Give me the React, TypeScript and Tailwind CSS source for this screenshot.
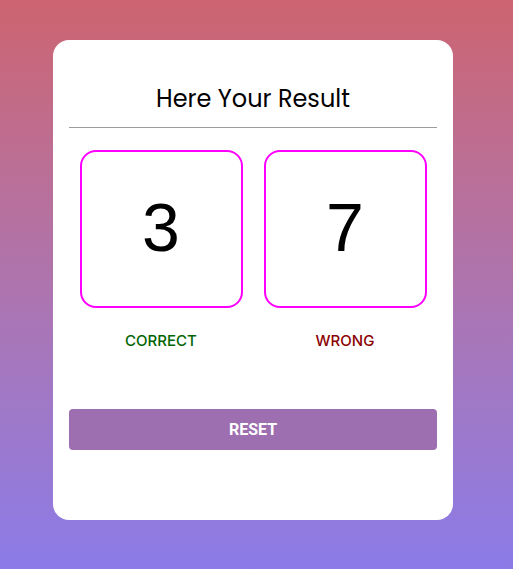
import React, { useState } from 'react';

export default function App() {
  const [correct, setCorrect] = useState(3);
  const [wrong, setWrong] = useState(7);

  const reset = () => {
    setCorrect(0);
    setWrong(0);
  };

  return (
    <div className="min-h-[569px] w-full bg-gradient-to-b from-[#cd6470] to-[#8b7be8] pt-[40px] pl-[53px] font-['Open_Sans',sans-serif]">
      <div className="w-[400px] h-[480px] rounded-2xl bg-white px-4 pt-[41px]">
        <h1 className="text-center text-[24px] leading-[36px] text-black font-['Poppins','Lato',sans-serif]">
          Here Your Result
        </h1>
        <hr className="mt-[10px] border-0 border-t border-[#9c9c9c]" />
        <div className="mt-[22px] grid grid-cols-2">
          <div className="flex flex-col items-center">
            <div className="flex h-[158px] w-[163px] items-center justify-center rounded-2xl border-2 border-[#ff00ff] pb-[4px] font-['Liberation_Sans',sans-serif] text-[68px] text-black">
              {correct}
            </div>
            <p className="mt-[22px] font-['Inter',sans-serif] text-[15px] font-medium leading-[22px] text-[#006400]">CORRECT</p>
          </div>
          <div className="flex flex-col items-center">
            <div className="flex h-[158px] w-[163px] items-center justify-center rounded-2xl border-2 border-[#ff00ff] pb-[4px] font-['Liberation_Sans',sans-serif] text-[68px] text-black">
              {wrong}
            </div>
            <p className="mt-[22px] font-['Inter',sans-serif] text-[15px] font-medium leading-[22px] text-[#8b0000]">WRONG</p>
          </div>
        </div>
        <button
          onClick={reset}
          className="mt-[57px] h-[41px] w-full rounded bg-[#9e6fb0] font-['Roboto',sans-serif] text-[16px] font-bold text-white"
        >
          RESET
        </button>
      </div>
    </div>
  );
}
